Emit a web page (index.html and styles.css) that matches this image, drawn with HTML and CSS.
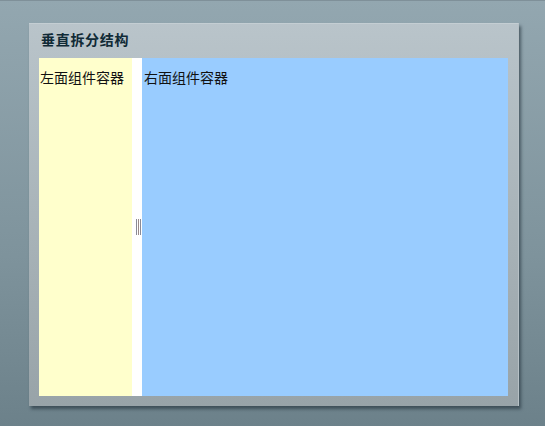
FILE: index.html
```html
<!DOCTYPE html>
<html>
<head>
<meta charset="utf-8">
<link rel="stylesheet" href="styles.css">
</head>
<body>
<div class="panel">
  <div class="panel-header">垂直拆分结构</div>
  <div class="split">
    <div class="pane pane-left">左面组件容器</div>
    <div class="splitter"><span class="grip"></span></div>
    <div class="pane pane-right">右面组件容器</div>
  </div>
</div>
</body>
</html>
```
FILE: styles.css
```css
html, body {
  margin: 0;
  padding: 0;
}
body {
  width: 545px;
  height: 426px;
  overflow: hidden;
  background: linear-gradient(to bottom, #93a7b0 0%, #7e939c 60%, #6c818a 100%);
  border-top: 1px solid #7f9099;
  box-sizing: border-box;
  padding-top: 22px;
  font-family: "Noto Sans CJK SC", "Noto Sans", sans-serif;
}
.panel {
  margin-left: 29px;
  width: 490px;
  height: 383px;
  box-sizing: border-box;
  background: linear-gradient(to bottom, #b9c4ca 0%, #a9b4b9 50%, #98a3a8 100%);
  border-top: 1px solid #c4ced3;
  border-right: 1px solid #b6c0c5;
  box-shadow: 2px 3px 3px rgba(30, 45, 55, 0.6);
  display: flex;
  flex-direction: column;
  padding: 0 10px 10px 10px;
}
.panel-header {
  height: 34px;
  box-sizing: border-box;
  padding: 5px 0 0 2px;
  font-size: 14px;
  letter-spacing: 0.7px;
  line-height: 20px;
  font-weight: bold;
  color: #102a36;
}
.split {
  flex: 1;
  display: flex;
}
.pane {
  font-size: 14px;
  line-height: 20px;
  color: #111;
  padding-top: 9px;
  box-sizing: border-box;
}
.pane-left {
  width: 93px;
  background: #ffffcc;
  padding-left: 1px;
}
.pane-right {
  flex: 1;
  background: #99ccff;
  padding-left: 2px;
}
.splitter {
  width: 10px;
  background: #ffffff;
  display: flex;
  align-items: center;
  justify-content: center;
}
.grip {
  display: block;
  width: 5px;
  height: 16px;
  margin-left: 2px;
  background: linear-gradient(to right, #8a8a96 0, #8a8a96 1px, transparent 1px, transparent 2px, #9a8a8a 2px, #9a8a8a 3px, transparent 3px, transparent 4px, #8a8a96 4px, #8a8a96 5px);
}
```
